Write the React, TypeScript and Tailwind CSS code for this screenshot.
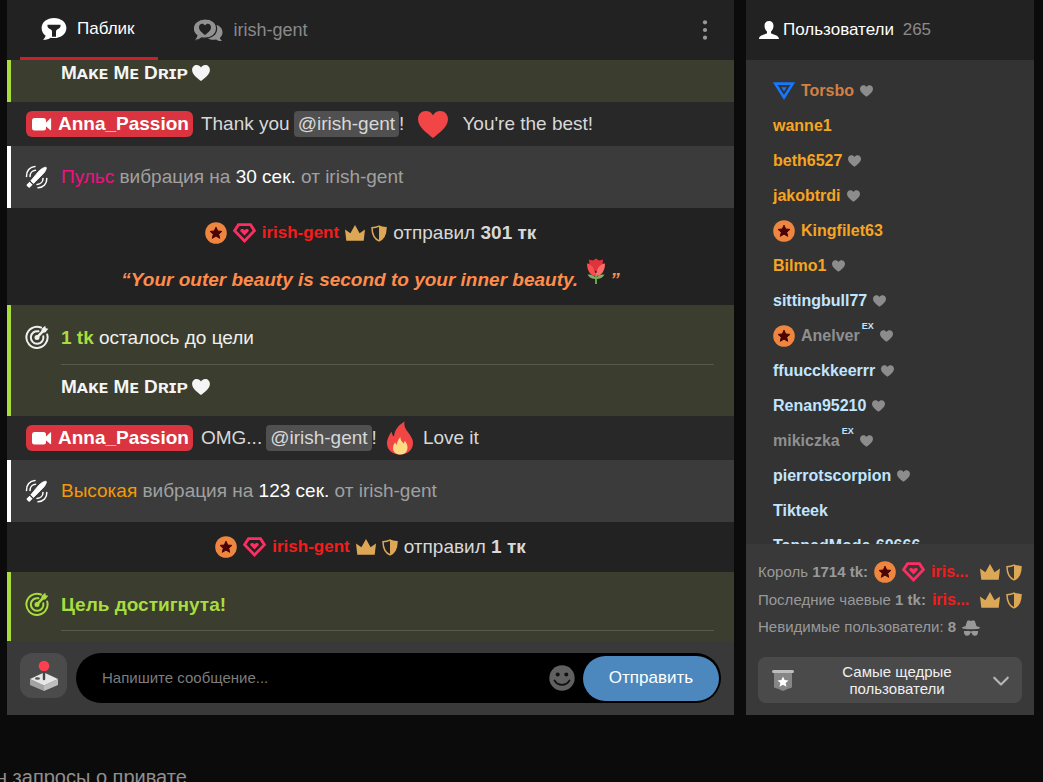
import React from "react";
import { FaChevronDown } from "react-icons/fa6";

type IconProps = { className?: string };

const Heart = ({ className = "" }: IconProps) => (
  <svg viewBox="0 0 20 18" className={className} fill="currentColor" aria-hidden="true">
    <path d="M10 18C6 14.800 0 10.600 0 5.500 0 2.300 2.300 0 5.200 0 7.300 0 9 1 10 2.800 11 1 12.700 0 14.800 0 17.700 0 20 2.300 20 5.500 20 10.600 14 14.800 10 18z" />
  </svg>
);

const StarBadge = () => (
  <svg viewBox="0 0 22 22" className="size-[22px] shrink-0" aria-hidden="true">
    <circle cx="11" cy="11" r="10.800" fill="#ee8640" />
    <path
      d="M11 5.200l1.700 3.800 4.200.400-3.200 2.800 1 4.100L11 14.100l-3.700 2.200 1-4.100-3.200-2.800 4.200-.400z"
      fill="#4a0404"
      stroke="#4a0404"
      strokeLinejoin="round"
    />
  </svg>
);

const Diamond = () => (
  <svg viewBox="0 0 23 20" className="w-[23px] h-5 shrink-0" aria-hidden="true">
    <path
      d="M5.500 1.700h12l3.900 6L11.500 18 1.600 7.700z"
      fill="none"
      stroke="#ff2d62"
      strokeWidth="2.800"
    />
    <path
      d="M11.500 12.500L7.600 8.600c-.800-1-.300-2.700 1.200-2.700 1.200 0 2 .400 2.700 1.300.700-.900 1.500-1.300 2.700-1.300 1.500 0 2 1.700 1.200 2.700z"
      fill="#ff2d62"
    />
  </svg>
);

const Crown = () => (
  <svg viewBox="0 0 20 16" className="w-5 h-4 shrink-0" fill="#dda855" aria-hidden="true">
    <path d="M0 4.500l5.400 3.700L10 0l4.600 8.200L20 4.500l-1.300 11.300H1.300z" />
  </svg>
);

const Shield = () => (
  <svg viewBox="0 0 16 17" className="w-4 h-[17px] shrink-0" aria-hidden="true">
    <path
      d="M8 1.100c-2 1-4.500 1.500-7 1.600.100 5.800 1.700 10.800 7 13.200 5.300-2.400 6.900-7.400 7-13.200-2.500-.100-5-.600-7-1.600z"
      fill="none"
      stroke="#dda855"
      strokeWidth="1.500"
    />
    <path d="M8 1v15c5.400-2.400 6.900-7.500 7-13.200C12.500 2.600 10 2 8 1z" fill="#dda855" />
  </svg>
);

const Triangle = () => (
  <svg viewBox="0 0 22 18" className="w-[22px] h-[18px] shrink-0" fill="none" aria-hidden="true">
    <path d="M2.300 1.600h17.400L11 15.500z" stroke="#1677ff" strokeWidth="2.600" />
    <path d="M8.300 5.300h5.400L11 9.500z" fill="#1677ff" />
  </svg>
);

const TipBubble = () => (
  <svg viewBox="0 0 26 24" className="w-[26px] h-6 shrink-0" aria-hidden="true">
    <path
      d="M13 1C6 1 .600 5.300.600 11c0 3.300 1.600 6 4 7.800-.300 1.500-1.200 2.800-2.600 4 3 .200 5.500-.600 7.500-2.100 1.100.300 2.300.400 3.500.400 7 0 12.400-4.400 12.400-10.100S20 1 13 1z"
      fill="#fff"
    />
    <path
      d="M6.500 7.800h13c.500 2-.800 3.500-3 4.500-1 .500-1.500 1.200-1.500 2.500v5h-4v-5c0-1.300-.500-2-1.500-2.500-2.200-1-3.500-2.500-3-4.500z"
      fill="#222"
    />
  </svg>
);

const HeartBubbles = () => (
  <svg viewBox="0 0 32 24" className="w-8 h-6 shrink-0" aria-hidden="true">
    <path
      d="M23 6.500c4.500.800 7.500 3.900 7.500 7.800 0 2.300-1 4.300-2.700 5.700.300 1 1 2 2.200 3-2.400.200-4.300-.400-5.800-1.500-3.800.800-7.200 0-9.300-2.300 4.500-.800 8-4.600 8.100-12.700z"
      fill="#929292"
    />
    <path
      d="M13 1C6.300 1 1.300 5 1.300 10.400c0 3 1.400 5.400 3.600 7.100-.300 1.700-1.300 3.200-3 4.700 3.100.200 5.700-.600 7.700-2.300 1.100.200 2.200.300 3.400.300 6.700 0 11.600-4.200 11.600-9.800S19.700 1 13 1z"
      fill="#929292"
      stroke="#222"
      strokeWidth="1.200"
    />
    <path
      d="M13 17c-3-2.400-6-4.700-6-7.800C7 5.500 11 4.400 13 7.500c2-3.100 6-2 6 1.700 0 3.100-3 5.400-6 7.800z"
      fill="#222"
    />
  </svg>
);

const Camera = () => (
  <svg viewBox="0 0 20 14" className="w-5 h-3.5 shrink-0" fill="#fff" aria-hidden="true">
    <rect y="1" width="14" height="12.500" rx="2.500" />
    <path d="M13 6.500L18.200 1.500c.500-.400.900-.200.900.500v10.500c0 .700-.400.900-.900.500L13 8.500z" />
  </svg>
);

const Vibe = () => (
  <svg viewBox="0 0 24 24" className="size-6 shrink-0" fill="none" aria-hidden="true">
    <path
      d="M5.800 15.800L13.500 6.500c2.300-2.400 4.800-4 7-4.300.700 0 1 .400.900 1-.400 2-1.900 4.400-4.200 6.600L8.500 18.500z"
      fill="#fff"
      stroke="#fff"
      strokeWidth=".800"
      strokeLinejoin="round"
    />
    <path d="M1.800 19.500l2.800-2.700 3 3-2.800 2.700c-.400.300-.900.300-1.200 0l-1.800-1.800c-.300-.300-.300-.800 0-1.200z" fill="#fff" />
    <path
      d="M1.500 11.500C1.200 6 4.800 1.800 10 1.600M5 11.500C5 8.200 7.200 5.600 10.500 5.300M21.800 13.500c.200 5-3.300 9-8.800 9.200M18 13.500c0 3.200-2.500 5.700-6 6"
      stroke="#fff"
      strokeWidth="1.500"
      strokeLinecap="round"
    />
  </svg>
);

const Target = ({ className = "" }: IconProps) => (
  <svg viewBox="0 0 24 24" className={`size-6 shrink-0 ${className}`} fill="none" aria-hidden="true">
    <g stroke="currentColor" strokeWidth="2" strokeLinecap="round">
      <path d="M16 2.500A10.600 10.600 0 1 0 22.200 9.500" />
      <path d="M13.500 6.300A6.300 6.300 0 1 0 18.300 11.200" />
      <path d="M12 12.400l6-6.200" strokeWidth="2.600" />
    </g>
    <path d="M16.200 7.800l.500-4L20.200.700l.600 2.500 2.500.600-3 3.600z" fill="currentColor" />
    <circle cx="12" cy="12.500" r="2.500" fill="currentColor" />
  </svg>
);

const Rose = () => (
  <svg viewBox="0 0 20 28" className="w-5 h-7 shrink-0" aria-hidden="true">
    <path d="M10 15v11" stroke="#6f9f52" strokeWidth="2" />
    <path d="M1.500 16.500c4-.500 7 .500 8.500 4 1.500-3.500 4.500-4.500 8.500-4-1.500 3-4.500 4.500-8.500 4.500s-7-1.500-8.500-4.500z" fill="#7fae5c" />
    <path d="M3 1.500l4 1L10 .500l3 2 4-1-.500 7-6.500 5-6.500-5z" fill="#e0343c" />
    <path d="M1 5.500c4 .500 7.500 4 9 12.500C4 18 1 12 1 5.500z" fill="#fb4d50" />
    <path d="M19 5.500c-4.500.500-8.500 4-9 12.500 6 0 9-6 9-12.500z" fill="#ff6b6b" />
  </svg>
);

const Flame = () => (
  <svg viewBox="0 0 26 34" className="w-[26px] h-[34px] shrink-0" aria-hidden="true">
    <path
      d="M17.500.500c-.800 5 1.500 8 4.500 12 2.300 3.300 4 6 4 9.500 0 7-5.500 11.500-13 11.500S0 29 0 22.500C0 17.500 2.500 14 4.500 10.500c.500 2.500 1 4 2.500 5C7.500 9 11.500 4 17.500.500z"
      fill="#f14546"
    />
    <path
      d="M13.500 16c-.300 3 1 4 3 6.500.700-.700 1.200-1.700 1.200-2.700 1.800 2.200 2.800 4 2.800 6.700 0 4.500-3 7-7.300 7-4.200 0-7.200-2.500-7.200-6.500 0-2.300 1-4 2.200-5.700.300 1.200.800 1.900 1.500 2.400.500-3.200 1.800-5.700 3.800-7.700z"
      fill="#ffd983"
    />
  </svg>
);

const Joystick = () => (
  <svg viewBox="0 0 30 32" className="w-[30px] h-8" aria-hidden="true">
    <path d="M1 19l14 6.500V31L1 25z" fill="#a3a3a3" />
    <path d="M29 19l-14 6.500V31l14-6z" fill="#bdbdbd" />
    <path d="M1 19l14-6.500L29 19l-14 6.500z" fill="#e6e6e6" />
    <ellipse cx="8.500" cy="18.500" rx="2.500" ry="1.300" fill="#555" />
    <path d="M15 9v10" stroke="#444" strokeWidth="2.400" strokeLinecap="round" />
    <circle cx="15" cy="6" r="5.300" fill="#ff3f50" />
  </svg>
);

const Smile = () => (
  <svg viewBox="0 0 26 26" className="size-[26px]" aria-hidden="true">
    <circle cx="13" cy="13" r="12.700" fill="#606060" />
    <circle cx="8.700" cy="9.500" r="2" fill="#111" />
    <circle cx="17.300" cy="9.500" r="2" fill="#111" />
    <path d="M5.500 15.500c3.500 5.700 11.500 5.700 15 0" stroke="#111" strokeWidth="1.800" fill="none" strokeLinecap="round" />
  </svg>
);

const Person = () => (
  <svg viewBox="0 0 20 20" className="size-5 shrink-0" fill="#fff" aria-hidden="true">
    <path d="M10 1C7.300 1 5.500 3 5.500 5.800c0 2.300 1 4.600 2.500 5.700v1.700c-2.300 1.500-8 1.700-8 5.800h20c0-4.100-5.700-4.300-8-5.800v-1.700c1.500-1.100 2.500-3.400 2.500-5.700C14.500 3 12.700 1 10 1z" />
  </svg>
);

const Incognito = () => (
  <svg viewBox="0 0 18 16" className="w-[18px] h-4 shrink-0" fill="currentColor" aria-hidden="true">
    <path d="M3.500 6.200L5 1.500C5.300.400 6.300.200 9 .900 11.700.200 12.700.400 13 1.500l1.500 4.700c2 .400 3.500.900 3.500 1.500C18 8.700 14 9.300 9 9.300S0 8.700 0 7.700c0-.600 1.500-1.100 3.500-1.500z" />
    <path d="M2 11h5.200l1.800.500 1.800-.500H16c.300 3-1 4.800-3 4.800s-3-1-3.400-3H8.400c-.400 2-1.400 3-3.400 3s-3.300-1.800-3-4.800z" />
  </svg>
);

const Pennant = () => (
  <svg viewBox="0 0 22 21" className="w-[22px] h-[21px] shrink-0" aria-hidden="true">
    <path d="M2 3h18v14.500c-3 1-6 2-9 3.500-3-1.500-6-2.500-9-3.500z" fill="#868686" />
    <rect width="22" height="3" rx="1.500" fill="#bdbdbd" />
    <path d="M11 6.500l1.600 3.500 3.900.400-2.900 2.600.900 3.800-3.500-2-3.500 2 .900-3.800-2.900-2.600 3.900-.400z" fill="#fff" />
  </svg>
);

const ModelBadge = () => (
  <span className="flex items-center gap-1.5 rounded-md bg-[#d9343f] pl-1.5 pr-1 font-bold text-white">
    <Camera />
    Anna_Passion
  </span>
);

const Mention = () => (
  <span className="ml-1 rounded-sm bg-[#505050] px-1">@irish-gent</span>
);

const ChatRow = ({ children }: { children: React.ReactNode }) => (
  <li className="flex items-center bg-[#282828] pl-[19px] h-11">{children}</li>
);

const VibeRow = ({ level, color, time }: { level: string; color: string; time: string }) => (
  <li className="flex items-center gap-3 border-l-4 border-white bg-[#3b3b3b] py-[18px] pl-3.5 text-[#a0a0a0]">
    <Vibe />
    <p>
      <span className={color}>{level}</span> вибрация на{" "}
      <span className="text-white">{time} сек.</span> от irish-gent
    </p>
  </li>
);

const TipLine = ({ amount }: { amount: string }) => (
  <p className="flex items-center justify-center gap-1.5">
    <StarBadge />
    <Diamond />
    <b className="text-[17px] text-[#f41c1c]">irish-gent</b>
    <Crown />
    <Shield />
    <span>
      отправил <b>{amount} тк</b>
    </span>
  </p>
);

const GoalName = () => (
  <p className="flex items-center gap-1 font-bold text-[#f5f5f5]">
    Mᴀᴋᴇ Mᴇ Dʀɪᴘ
    <Heart className="w-[18px] h-4" />
  </p>
);

const users = [
  { name: "Torsbo", color: "text-[#d28045]", badge: "triangle", liked: true },
  { name: "wanne1", color: "text-[#f7a521]" },
  { name: "beth6527", color: "text-[#f7a521]", liked: true },
  { name: "jakobtrdi", color: "text-[#f7a521]", liked: true },
  { name: "Kingfilet63", color: "text-[#f7a521]", badge: "star" },
  { name: "Bilmo1", color: "text-[#f7a521]", liked: true },
  { name: "sittingbull77", color: "text-[#c2e5ff]", liked: true },
  { name: "Anelver", color: "text-[#8f8f8f]", badge: "star", ex: true, liked: true },
  { name: "ffuucckkeerrr", color: "text-[#c2e5ff]", liked: true },
  { name: "Renan95210", color: "text-[#c2e5ff]", liked: true },
  { name: "mikiczka", color: "text-[#8f8f8f]", ex: true, liked: true },
  { name: "pierrotscorpion", color: "text-[#c2e5ff]", liked: true },
  { name: "Tikteek", color: "text-[#c2e5ff]" },
  { name: "TappedMode-60666", color: "text-[#c2e5ff]" },
];

const Chat = () => {
  return (
    <main className="flex min-w-0 flex-1 flex-col bg-[#222]">
      {/* Tabs */}
      <nav className="flex h-[60px] pl-[13px] text-[17px]">
        <button className="flex items-center gap-2.5 border-b-3 border-[#c9202c] pl-[21px] pr-[23px] text-white">
          <TipBubble />
          Паблик
        </button>
        <button className="ml-[34px] flex items-center gap-2.5 text-[18px] text-[#8a8a8a]">
          <HeartBubbles />
          irish-gent
        </button>
        <button aria-label="Меню" className="ml-auto mr-[26px] text-[#999]">
          <svg viewBox="0 0 6 20" className="w-1.5 h-5" fill="currentColor" aria-hidden="true">
            <circle cx="3" cy="2.300" r="2.100" />
            <circle cx="3" cy="10" r="2.100" />
            <circle cx="3" cy="17.700" r="2.100" />
          </svg>
        </button>
      </nav>

      {/* Messages */}
      <ul className="text-[19px] leading-[26px] text-[#d8d8d8]">
        <li className="border-l-4 border-[#a9dd3e] bg-[#3b3e2f] pb-4 pl-[50px]">
          <GoalName />
        </li>
        <ChatRow>
          <ModelBadge />
          <p className="ml-2 flex items-center">
            Thank you
            <Mention />!
            <Heart className="mx-[14px] w-[30px] h-[27px] text-[#f14546]" />
            You're the best!
          </p>
        </ChatRow>
        <VibeRow level="Пульс" color="text-[#f0107f]" time="30" />
        <li className="bg-[#222] py-3">
          <TipLine amount="301" />
          <p className="mt-2 flex h-[39px] items-end justify-center font-bold italic text-[#ff8c4b]">
            “Your outer beauty is second to your inner beauty.
            <span className="ml-2 mr-1 self-start pt-1">
              <Rose />
            </span>
            ”
          </p>
        </li>
        <li className="flex gap-3 border-l-4 border-[#a9dd3e] bg-[#3b3e2f] pb-4 pl-3.5 pr-5 pt-5 text-[#f0f0f0]">
          <Target />
          <div className="flex-1">
            <p className="mb-[13px]">
              <b className="text-[#a9dd3e]">1 tk</b> осталось до цели
            </p>
            <hr className="mb-[9px] border-[#585b4b]" />
            <GoalName />
          </div>
        </li>
        <ChatRow>
          <ModelBadge />
          <p className="ml-2 flex items-center">
            OMG...
            <Mention />!
            <span className="mx-2.5">
              <Flame />
            </span>
            Love it
          </p>
        </ChatRow>
        <VibeRow level="Высокая" color="text-[#f39a08]" time="123" />
        <li className="bg-[#222] py-3">
          <TipLine amount="1" />
        </li>
        <li className="flex gap-3 border-l-4 border-[#a9dd3e] bg-[#3b3e2f] pl-3.5 pr-5 pt-5 pb-2.5 text-[#a9dd3e]">
          <Target />
          <div className="flex-1">
            <p className="mb-3 font-bold">Цель достигнута!</p>
            <hr className="border-[#585b4b]" />
          </div>
        </li>
      </ul>

      {/* Message form */}
      <form className="flex items-start gap-[9px] bg-[#393939] py-3 pl-[13px] pr-[13px]">
        <button
          type="button"
          aria-label="Игры"
          className="flex h-[45px] w-[47px] shrink-0 items-center justify-center rounded-xl bg-[#4b4b4b]"
        >
          <Joystick />
        </button>
        <div className="flex h-[50px] min-w-0 flex-1 items-center rounded-full bg-black pl-[26px] pr-0.5">
          <input
            type="text"
            aria-label="Сообщение"
            placeholder="Напишите сообщение..."
            className="min-w-0 flex-1 text-[15px] text-white placeholder:text-[#7d7d7d]"
          />
          <button type="button" aria-label="Смайлы" className="mr-2">
            <Smile />
          </button>
          <button type="button" className="h-[45px] w-[136px] rounded-full bg-[#4c88bd] text-[17px] text-white">
            Отправить
          </button>
        </div>
      </form>
    </main>
  );
};

const Users = () => {
  return (
    <aside className="flex w-[288px] shrink-0 flex-col bg-[#333]">
      <h2 className="flex h-[60px] items-center gap-1 bg-[#222] pl-[13px] text-[17px] text-white">
        <Person />
        <span>
          Пользователи <span className="ml-1 text-[#8a8a8a]">265</span>
        </span>
      </h2>

      <ul className="h-0 grow overflow-hidden pl-[27px] pt-[13px]">
        {users.map((user) => (
          <li key={user.name} className="flex h-[35px] items-center gap-1.5">
            {user.badge === "triangle" && <Triangle />}
            {user.badge === "star" && <StarBadge />}
            <b className={`text-base ${user.color}`}>
              {user.name}
              {user.ex && <sup className="-top-3 ml-0.5 text-[9px] text-[#c2e5ff]">EX</sup>}
            </b>
            {user.liked && <Heart className="w-[13px] h-3 text-[#8c8c8c]" />}
          </li>
        ))}
      </ul>

      {/* Totals */}
      <div className="bg-[#393939] px-3 pb-3 pt-3.5 text-[15px] text-[#999]">
        <p className="flex h-7 items-center gap-1.5">
          <span>
            Король <b>1714 tk:</b>
          </span>
          <StarBadge />
          <Diamond />
          <b className="text-base text-[#f41c1c]">iris...</b>
          <span className="ml-auto flex gap-1.5">
            <Crown />
            <Shield />
          </span>
        </p>
        <p className="flex h-7 items-center gap-1.5">
          <span>
            Последние чаевые <b>1 tk:</b>
          </span>
          <b className="text-base text-[#f41c1c]">iris...</b>
          <span className="ml-auto flex gap-1.5">
            <Crown />
            <Shield />
          </span>
        </p>
        <p className="mb-4 flex h-[27px] items-center gap-1.5">
          <span>
            Невидимые пользователи: <b>8</b>
          </span>
          <Incognito />
        </p>
        <button className="flex w-full items-center rounded-lg bg-[#4a4a4a] py-1.5 pl-[14px] pr-3 text-[15px] leading-[17px] text-[#f0f0f0]">
          <Pennant />
          <span className="flex-1 pl-11 pr-9">Самые щедрые пользователи</span>
          <FaChevronDown className="size-[18px] text-[#b5b5b5]" />
        </button>
      </div>
    </aside>
  );
};

const App = () => {
  return (
    <div className="h-screen overflow-hidden bg-[#0b0b0b] font-['Liberation_Sans',Arial,sans-serif]">
      <div className="flex gap-3 pl-[7px] pr-[9px]">
        <Chat />
        <Users />
      </div>
      <p className="-ml-1 mt-[50px] whitespace-nowrap text-[20px] leading-6 text-[#8f8f8f]">н запросы о привате</p>
    </div>
  );
};

export default App;
